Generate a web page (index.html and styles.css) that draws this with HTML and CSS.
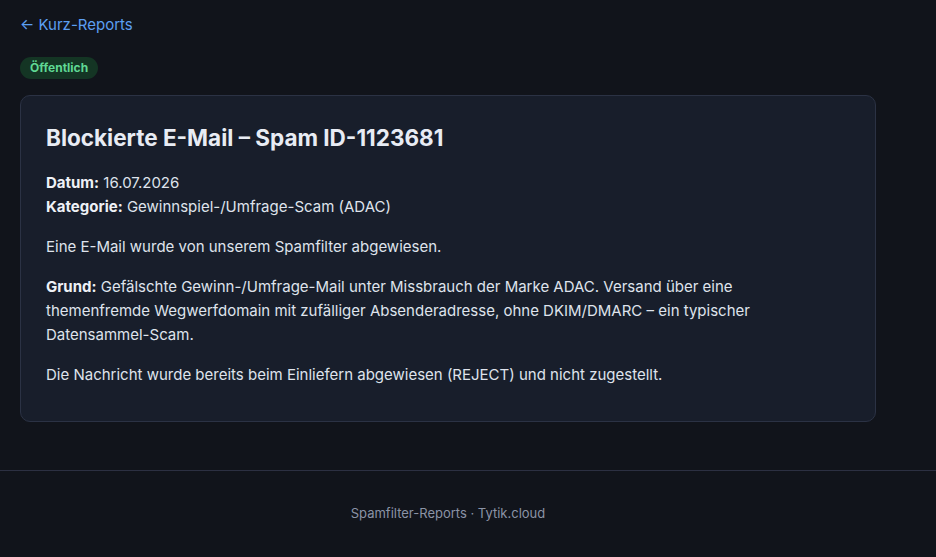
FILE: index.html
```html
<!DOCTYPE html>
<html lang="de">
<head>
    <meta charset="UTF-8">
    <meta name="viewport" content="width=device-width, initial-scale=1.0">
    <title>Blockierte E-Mail – Spam ID-1123681</title>
    <link rel="stylesheet" href="styles.css">
</head>
<body>
    <main class="container">
        <a class="back" href="#">&larr; Kurz-Reports</a>

        <div class="badges">
            <span class="badge">Öffentlich</span>
        </div>

        <!-- Report -->
        <article class="card">
            <h1>Blockierte E-Mail – Spam ID-1123681</h1>
            <p>
                <strong>Datum:</strong> 16.07.2026<br>
                <strong>Kategorie:</strong> Gewinnspiel-/Umfrage-Scam (ADAC)
            </p>
            <p>Eine E-Mail wurde von unserem Spamfilter abgewiesen.</p>
            <p><strong>Grund:</strong> Gefälschte Gewinn-/Umfrage-Mail unter Missbrauch der Marke ADAC. Versand über eine themenfremde Wegwerfdomain mit zufälliger Absenderadresse, ohne DKIM/DMARC – ein typischer Datensammel-Scam.</p>
            <p>Die Nachricht wurde bereits beim Einliefern abgewiesen (REJECT) und nicht zugestellt.</p>
        </article>
    </main>

    <footer class="footer">
        <div class="footer-inner">Spamfilter-Reports · Tytik.cloud</div>
    </footer>
</body>
</html>
```

FILE: styles.css
```css
body {
    font-family: Inter, "Noto Sans", sans-serif;
    margin: 0;
    padding: 0;
    background-color: #11141b;
    color: #dfe3ec;
}
.container {
    max-width: 856px;
    padding: 14px 20px 0;
}
.back {
    display: inline-block;
    color: #5c9ff2;
    text-decoration: none;
    font-size: 15px;
    line-height: 22px;
}
.badges {
    margin-top: 20px;
}
.badge {
    display: inline-block;
    padding: 0 10px;
    height: 22px;
    line-height: 22px;
    border-radius: 11px;
    background-color: #143524;
    color: #5fd894;
    font-size: 12px;
    font-weight: 700;
}
.card {
    margin-top: 16px;
    padding: 27px 58px 34px 25px;
    background-color: #181e2b;
    border: 1px solid #2b3244;
    border-radius: 10px;
}
.card h1 {
    margin: 0 0 18px;
    font-size: 22.5px;
    line-height: 30px;
    font-weight: 700;
    color: #e8ecf4;
}
.card p {
    margin: 0 0 16px;
    font-size: 15px;
    line-height: 24px;
}
.card p:last-child {
    margin-bottom: 0;
}
.card strong {
    font-weight: 700;
    color: #eef1f6;
}
.footer {
    margin-top: 48px;
    border-top: 1px solid #2c3042;
}
.footer-inner {
    max-width: 856px;
    padding: 34px 20px;
    text-align: center;
    font-size: 13px;
    color: #8b93a6;
}
```
